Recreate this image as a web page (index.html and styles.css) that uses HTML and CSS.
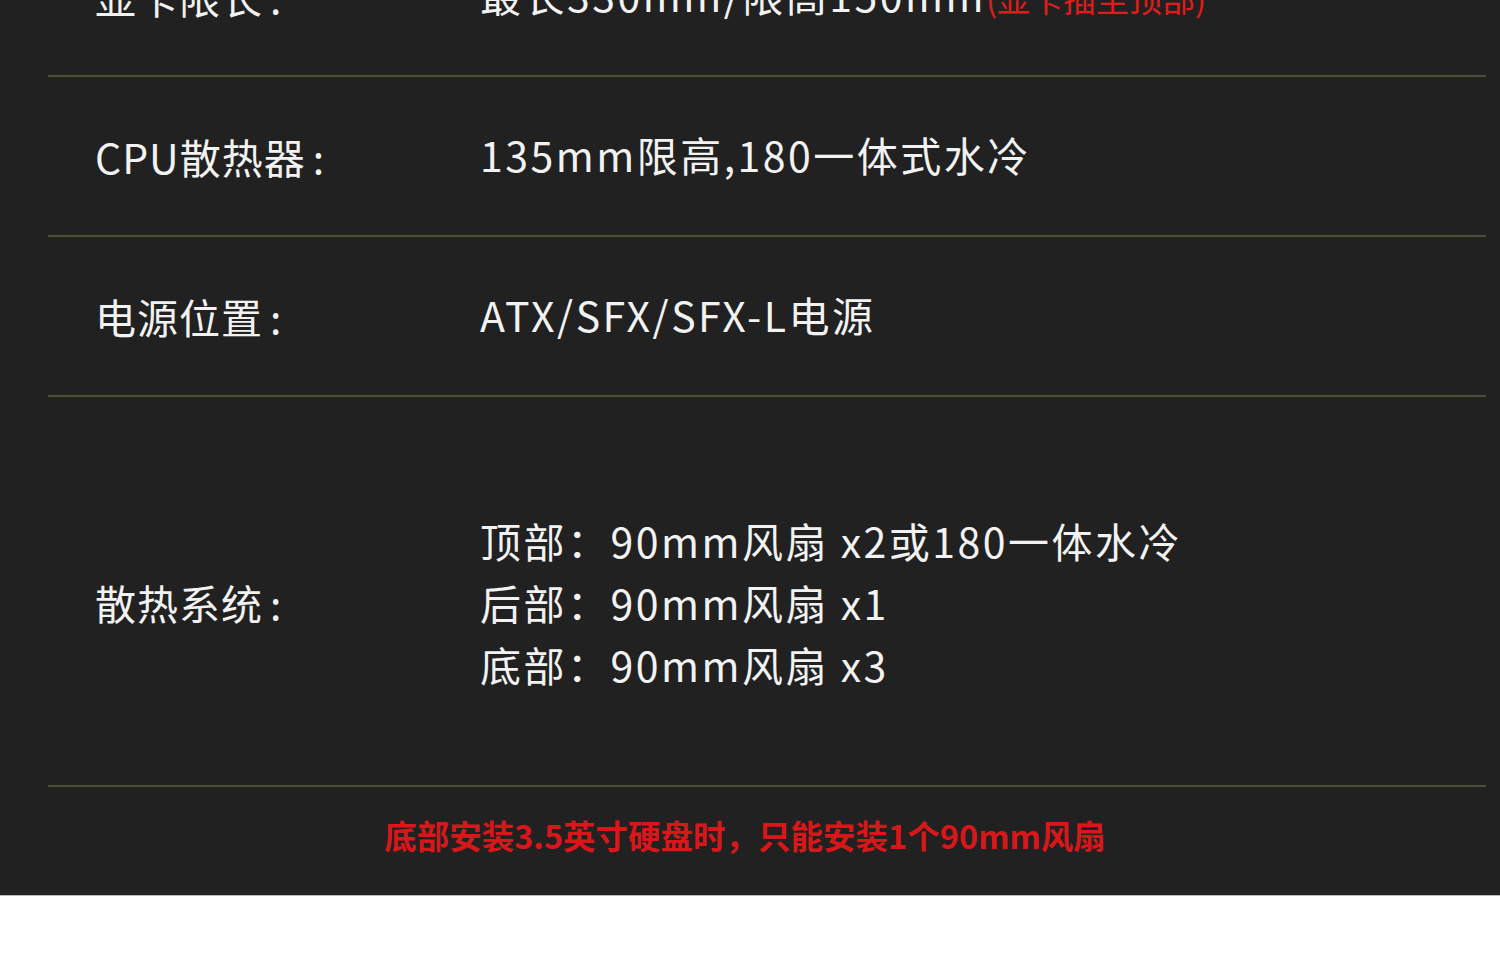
FILE: index.html
```html
<!DOCTYPE html>
<html lang="zh-CN">
<head>
    <meta charset="UTF-8">
    <title>机箱参数</title>
    <link rel="stylesheet" href="styles.css">
</head>
<body>
<div class="spec">
    <div class="row row-first">
        <div class="label">显卡限长<span class="colon">:</span></div>
        <div class="value">最长330mm/限高150mm<span class="warn">(显卡插至顶部)</span></div>
    </div>
    <div class="row">
        <div class="label">CPU散热器<span class="colon">:</span></div>
        <div class="value">135mm限高,180一体式水冷</div>
    </div>
    <div class="row">
        <div class="label">电源位置<span class="colon">:</span></div>
        <div class="value">ATX/SFX/SFX-L电源</div>
    </div>
    <div class="row row-tall">
        <div class="label">散热系统<span class="colon">:</span></div>
        <div class="value lines">
            <p>顶部：90mm风扇 x2或180一体水冷</p>
            <p>后部：90mm风扇 x1</p>
            <p>底部：90mm风扇 x3</p>
        </div>
    </div>
    <p class="note">底部安装3.5英寸硬盘时，只能安装1个90mm风扇</p>
</div>
</body>
</html>
```

FILE: styles.css
```css
body {
    margin: 0;
    background-color: #fff;
    font-family: "Noto Sans CJK SC", "Noto Sans", sans-serif;
}
.spec {
    background-color: #212121;
    color: #f2f2f2;
    margin-top: -83px;
    padding: 0 14px 0 48px;
    border-bottom: 1px solid #bbb;
}
.row {
    display: grid;
    grid-template-columns: 385px 1fr;
    align-items: center;
    box-sizing: border-box;
    height: 160px;
    padding-left: 47px;
    border-bottom: 2px solid #4a5131;
}
.row-tall {
    height: 390px;
    padding-top: 22px;
}
.label {
    font-size: 41px;
    letter-spacing: 1px;
}
.colon {
    margin-left: 7px;
}
.value {
    font-size: 41px;
    letter-spacing: 2.5px;
    margin-top: -4px;
}
.warn {
    color: #e01c1c;
    font-size: 33px;
    letter-spacing: 0;
}
.lines {
    margin-top: 0;
}
.lines p {
    margin: 0;
    line-height: 62px;
}
.note {
    margin: 0 -14px 0 -48px;
    padding: 28px 10px 40px 0;
    text-align: center;
    color: #d8171b;
    font-size: 32.5px;
    font-weight: bold;
    line-height: 40px;
}
```
